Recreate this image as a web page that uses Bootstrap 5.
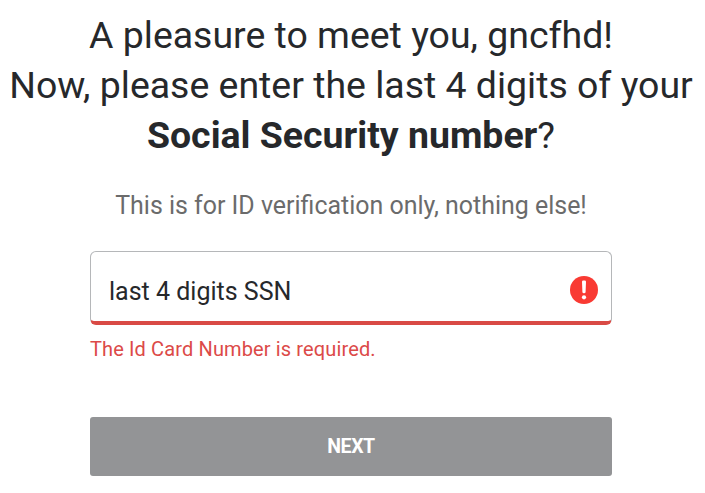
<!DOCTYPE html>
<html lang="en">
<head>
<meta charset="utf-8">
<meta name="viewport" content="width=device-width, initial-scale=1">
<title>Verification</title>
<link href="https://cdn.jsdelivr.net/npm/bootstrap@5.3.0/dist/css/bootstrap.min.css" rel="stylesheet">
<style>
body{font-family:Roboto,sans-serif;color:#26282b;overflow:hidden}
.page-main{padding-right:3px}
.page-title{font-size:37.45px;line-height:50px;padding-top:10px;white-space:nowrap}
.note{font-size:24.95px;line-height:30px;margin-top:31px;color:#6b6b6b}
.form-area{width:522px;margin-top:30px}
.ssn-box{height:74px;border:1px solid #b5b7b9;border-bottom:4px solid #d94a45;border-radius:6px;padding:6px 13px 0 18px}
.ssn-input,.ssn-input:focus{font-size:25px;color:#26282b;outline:0;box-shadow:none;margin-top:4px}
.ssn-input::placeholder{color:#26282b;opacity:1}
.error-text{font-size:20px;line-height:24px;margin-top:12px;color:#dc4a48;letter-spacing:.13px}
.next-btn,.next-btn:disabled{height:59px;margin-top:56px;background:#939496;border:0;border-radius:3px;color:#fff;opacity:1;font-size:19.5px;letter-spacing:-.4px}
</style>
</head>
<body class="bg-white">
<main class="page-main d-flex flex-column align-items-center text-center">
<h1 class="page-title fw-normal mb-0">A pleasure to meet you, gncfhd!<br>Now, please enter the last 4 digits of your<br><strong class="fw-bold">Social Security number</strong>?</h1>
<p class="note mb-0">This is for ID verification only, nothing else!</p>
<form class="form-area text-start">
<div class="ssn-box d-flex align-items-center">
<input class="ssn-input form-control border-0 bg-transparent p-0" placeholder="last 4 digits SSN" aria-label="last 4 digits SSN">
<svg class="flex-shrink-0" width="28" height="28" viewBox="0 0 28 28"><circle cx="14" cy="14" r="14" fill="#f93a33"/><path d="M12 5.8q0-1.3 1.3-1.3h1.4q1.3 0 1.3 1.3l-.4 10.2q0 1.3-1.6 1.3t-1.6-1.3z" fill="#fff"/><circle cx="14" cy="21.3" r="2.1" fill="#fff"/></svg>
</div>
<div class="error-text">The Id Card Number is required.</div>
<button type="button" class="next-btn btn w-100 fw-bold" disabled>NEXT</button>
</form>
</main>
<script src="https://cdn.jsdelivr.net/npm/bootstrap@5.3.0/dist/js/bootstrap.bundle.min.js"></script>
</body>
</html>
